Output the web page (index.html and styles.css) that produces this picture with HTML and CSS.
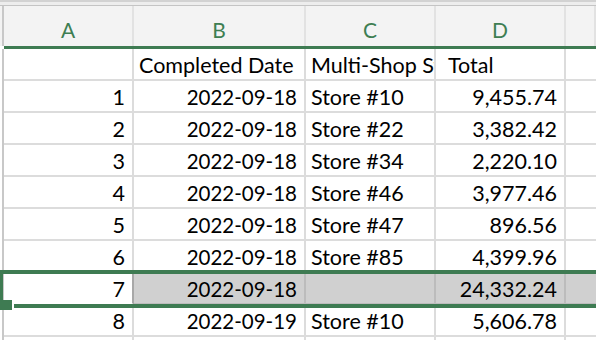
FILE: index.html
```html
<!DOCTYPE html>
<html>
<head>
<meta charset="utf-8">
<link rel="stylesheet" href="styles.css">
</head>
<body>
<div class="sheet">
  <div class="topbar"></div>
  <div class="grid head">
    <div class="gut"></div>
    <div class="ch">A</div>
    <div class="ch">B</div>
    <div class="ch">C</div>
    <div class="ch">D</div>
    <div class="ch last"></div>
  </div>
  <div class="greenline"></div>
  <div class="grid row">
    <div class="gut"></div>
    <div class="c r"></div>
    <div class="c l">Completed Date</div>
    <div class="c l clip"><span class="clipped">Multi-Shop Store</span></div>
    <div class="c l pl">Total</div>
    <div class="c last"></div>
  </div>
  <div class="grid row"><div class="gut"></div><div class="c r">1</div><div class="c r dt">2022-09-18</div><div class="c l">Store #10</div><div class="c r">9,455.74</div><div class="c last"></div></div>
  <div class="grid row"><div class="gut"></div><div class="c r">2</div><div class="c r dt">2022-09-18</div><div class="c l">Store #22</div><div class="c r">3,382.42</div><div class="c last"></div></div>
  <div class="grid row"><div class="gut"></div><div class="c r">3</div><div class="c r dt">2022-09-18</div><div class="c l">Store #34</div><div class="c r">2,220.10</div><div class="c last"></div></div>
  <div class="grid row"><div class="gut"></div><div class="c r">4</div><div class="c r dt">2022-09-18</div><div class="c l">Store #46</div><div class="c r">3,977.46</div><div class="c last"></div></div>
  <div class="grid row"><div class="gut"></div><div class="c r">5</div><div class="c r dt">2022-09-18</div><div class="c l">Store #47</div><div class="c r">896.56</div><div class="c last"></div></div>
  <div class="grid row"><div class="gut"></div><div class="c r">6</div><div class="c r dt">2022-09-18</div><div class="c l">Store #85</div><div class="c r">4,399.96</div><div class="c last"></div></div>
  <div class="grid row sel"><div class="gut"></div><div class="c r active">7</div><div class="c r dt">2022-09-18</div><div class="c l"></div><div class="c r">24,332.24</div><div class="c last"></div></div>
  <div class="grid row"><div class="gut"></div><div class="c r">8</div><div class="c r dt">2022-09-19</div><div class="c l">Store #10</div><div class="c r">5,606.78</div><div class="c last"></div></div>
  <div class="grid row"><div class="gut"></div><div class="c r"></div><div class="c r"></div><div class="c l"></div><div class="c r"></div><div class="c last"></div></div>
  <div class="selection"></div>
  <div class="handle"></div>
</div>
</body>
</html>
```
FILE: styles.css
```css
html, body {
  margin: 0;
  padding: 0;
  background: #ffffff;
}
.sheet {
  position: relative;
  width: 596px;
  height: 340px;
  overflow: hidden;
  font-family: Lato, "Open Sans", sans-serif;
  color: #000000;
}
.topbar {
  height: 6px;
  box-sizing: border-box;
  background: #ededed;
  border-top: 2px solid #d2d2d2;
  border-bottom: 1px solid #c4c4c4;
}
.grid {
  display: grid;
  grid-template-columns: 4px 130px 172px 130px 130px 1fr;
}
.gut {
  box-sizing: border-box;
  border-right: 2px solid #c8c8c8;
}
.head {
  height: 40px;
  background: #f3f3f3;
}
.ch {
  box-sizing: border-box;
  border-right: 2px solid #e2e2e2;
  display: flex;
  align-items: center;
  justify-content: center;
  color: #3e7e52;
  font-size: 21px;
  padding-top: 6px;
}
.greenline {
  height: 3px;
  margin-left: 4px;
  background: #3e7b52;
}
.row {
  height: 32px;
}
.c {
  box-sizing: border-box;
  border-right: 2px solid #dcdcdc;
  border-bottom: 2px solid #dcdcdc;
  display: flex;
  align-items: center;
  font-size: 21.5px;
  white-space: nowrap;
  overflow: hidden;
  padding: 2px 7px 0 5px;
}
.c.r {
  justify-content: flex-end;
}
.c.l {
  justify-content: flex-start;
}
.c.dt {
  font-size: 20.5px;
}
.c.clip {
  padding-right: 0;
}
.clipped {
  display: block;
  overflow: hidden;
  max-width: 123px;
}
.c.pl {
  padding-left: 12px;
}
.c.last {
  border-right: none;
}
.sel .c {
  background: #d0d0d0;
  border-color: #bcbcbc;
}
.sel .c.active {
  background: #ffffff;
  border-right-color: #a8a8a8;
  border-bottom-color: #ffffff;
}
.selection {
  position: absolute;
  left: 0;
  right: -10px;
  top: 270px;
  height: 38px;
  box-sizing: border-box;
  border-top: 4px solid #3e7b52;
  border-bottom: 4px solid #3e7b52;
  border-left: 3px solid #3e7b52;
}
.handle {
  position: absolute;
  left: 0;
  top: 300px;
  width: 12px;
  height: 10px;
  background: #3e7b52;
  border-right: 2px solid #ffffff;
}
```
